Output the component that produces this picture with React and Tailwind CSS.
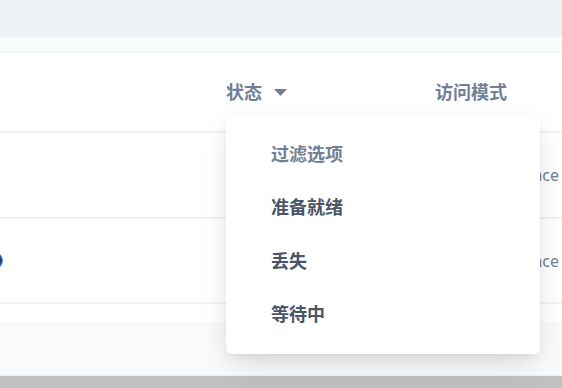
import React from "react";

const font = { fontFamily: '"Noto Sans", "Noto Sans CJK SC", sans-serif' };

export default function App() {
  return (
    <div
      className="relative w-[562px] h-[388px] overflow-hidden bg-white flex flex-col"
      style={font}
    >
      <div className="h-[37px] bg-[#eef2f7] shrink-0" />
      <div className="h-[16px] bg-[#f8fafc] border-b border-[#edf2f7] shrink-0" />
      {/* header */}
      <div className="h-[80px] shrink-0 flex items-center border-b-2 border-[#edf2f7] text-[18px] font-bold text-[#718096]">
        <div className="w-[226px] shrink-0" />
        <div className="w-[209px] shrink-0 flex items-center">
          <span>状态</span>
          <svg width="13" height="7" viewBox="0 0 13 7" className="ml-[12px]">
            <path d="M0 0 L13 0 L6.5 7 Z" fill="#718096" />
          </svg>
        </div>
        <div className="flex-1 whitespace-nowrap">访问模式</div>
      </div>
      {/* row 1 */}
      <div className="h-[86px] shrink-0 flex items-center border-b-2 border-[#edf2f7] text-[16px] text-[#718096]">
        <div className="w-[226px] shrink-0" />
        <div className="w-[209px] shrink-0" />
        <div className="flex-1 whitespace-nowrap text-right pr-[3px]">ReadWriteOnce</div>
      </div>
      {/* row 2 */}
      <div className="h-[85px] shrink-0 flex items-center border-b-2 border-[#edf2f7] text-[16px] text-[#718096]">
        <div className="w-[226px] shrink-0 flex items-center">
          <div className="-ml-[13px] w-[15px] h-[15px] rounded-full border-[3px] border-[#1e3a5f] ring-1 ring-[#3b82f6]" />
        </div>
        <div className="w-[209px] shrink-0" />
        <div className="flex-1 whitespace-nowrap text-right pr-[3px]">ReadWriteOnce</div>
      </div>
      <div className="h-[18px] shrink-0 bg-white" />
      <div className="flex-1 bg-[#f8fafc] border-b border-[#edf2f7]" />
      <div className="h-[12px] shrink-0 bg-[#c0c0c0]" />

      {/* dropdown */}
      <div className="absolute left-[226px] top-[115px] w-[314px] h-[239px] bg-white rounded-[6px] shadow-[0_12px_30px_-4px_rgba(0,0,0,0.14),0_4px_10px_-2px_rgba(0,0,0,0.06)] flex flex-col py-[13px] pl-[45px] text-[18px] font-bold">
        <div className="h-[54px] flex items-center text-[#718096]">过滤选项</div>
        <div className="h-[54px] flex items-center text-[#4a5568]">准备就绪</div>
        <div className="h-[54px] flex items-center text-[#4a5568]">丢失</div>
        <div className="h-[54px] flex items-center text-[#4a5568]">等待中</div>
      </div>
    </div>
  );
}
